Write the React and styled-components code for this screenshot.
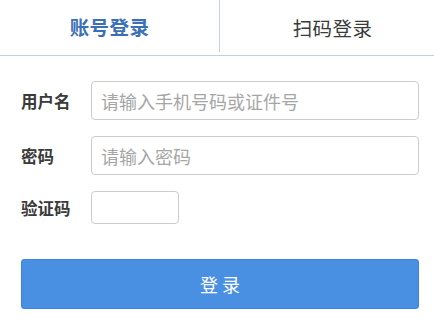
import styled, { createGlobalStyle } from "styled-components";

const GlobalStyle = createGlobalStyle`
  body {
    margin: 0;
    background: #fff;
    font-family: "Noto Sans CJK SC", "Noto Sans", sans-serif;
  }
`;

const LoginPage = () => {
  return (
    <Wrapper>
      <GlobalStyle />
      <Tabs>
        <Tab $active $shift="-5px">账号登录</Tab>
        <Tab $shift="11px">扫码登录</Tab>
      </Tabs>
      <StyledForm>
        <div className="row">
          <label htmlFor="username">用户名</label>
          <Input id="username" placeholder="请输入手机号码或证件号" />
        </div>
        <div className="row">
          <label htmlFor="password">密码</label>
          <Input id="password" type="password" placeholder="请输入密码" />
        </div>
        <div className="row captcha">
          <label htmlFor="captcha">验证码</label>
          <Input id="captcha" $small />
        </div>
        <SubmitButton type="button">登 录</SubmitButton>
      </StyledForm>
    </Wrapper>
  );
};

const Wrapper = styled.div`
  width: 434px;
  height: 319px;
  overflow: hidden;
`;

const Tabs = styled.div`
  display: grid;
  grid-template-columns: 220px 1fr;
  height: 55px;
  border-bottom: 1px solid #c3cfe0;
`;

const Tab = styled.div`
  display: flex;
  align-items: center;
  justify-content: center;
  padding: 0 0 0 ${(p) => p.$shift};
  font-size: 19.5px;
  font-weight: ${(p) => (p.$active ? 700 : 400)};
  color: ${(p) => (p.$active ? "#3b6fb6" : "#3a3a3a")};
  border-right: ${(p) => (p.$active ? "1px solid #c3cfe0" : "none")};
  margin-bottom: ${(p) => (p.$active ? "3px" : "0")};
  letter-spacing: 0.4px;
`;

const StyledForm = styled.form`
  display: flex;
  flex-direction: column;
  padding: 25px 15px 0 21px;
  .row {
    display: flex;
    align-items: center;
    height: 39px;
    margin-bottom: 16px;
  }
  .captcha {
    height: 33px;
    margin-bottom: 35px;
  }
  label {
    width: 70px;
    font-size: 16.5px;
    font-weight: 700;
    color: #3a3a3a;
  }
`;

const Input = styled.input`
  box-sizing: border-box;
  width: ${(p) => (p.$small ? "88px" : "328px")};
  height: ${(p) => (p.$small ? "33px" : "39px")};
  border: 1px solid #ccc;
  border-radius: 4px;
  padding: 0 9px;
  font-family: inherit;
  font-size: 18px;
  color: #333;
  outline: none;
  &::placeholder {
    color: #a6a6a6;
  }
`;

const SubmitButton = styled.button`
  box-sizing: border-box;
  width: 398px;
  height: 50px;
  background: #4a90e2;
  border: 1px solid #3a83ea;
  border-radius: 3px;
  color: #fff;
  font-family: inherit;
  font-size: 18px;
  cursor: pointer;
`;

export default LoginPage;
